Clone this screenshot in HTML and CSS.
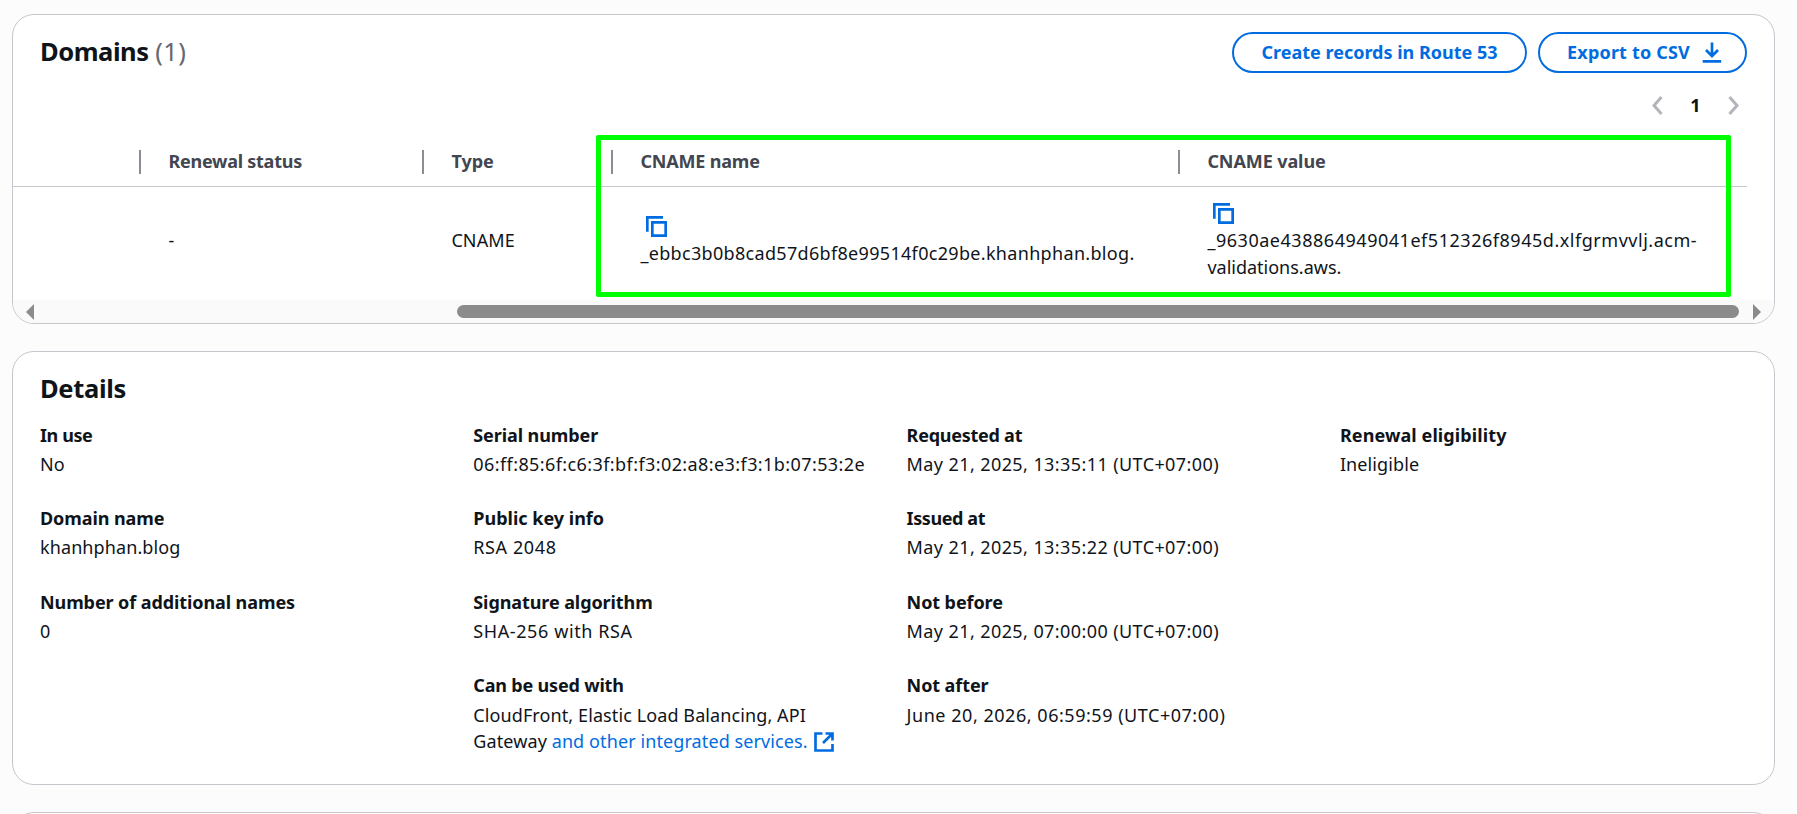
FILE: index.html
```html
<!DOCTYPE html>
<html lang="en">
<head>
<meta charset="utf-8">
<title>Certificate</title>
<link rel="stylesheet" href="styles.css">
</head>
<body>
<main class="page">
  <section class="card domains">
    <header class="card-header">
      <h2 class="heading"><span class="heading-domains">Domains</span> <span class="counter">(1)</span></h2>
      <div class="actions">
        <button class="button">Create records in Route 53</button>
        <button class="button button-icon track-2">Export to CSV
          <svg class="download" viewBox="0 0 20 21"><path d="M10 0.5V13.5M4 8L10 14L16 8M0.7 19.3H19.2"/></svg>
        </button>
      </div>
    </header>
    <nav class="pagination">
      <svg class="chevron" viewBox="0 0 11 19"><path d="M9.5 1L2 9.5L9.5 18"/></svg>
      <span class="page-number">1</span>
      <svg class="chevron" viewBox="0 0 11 19"><path d="M1.5 1L9 9.5L1.5 18"/></svg>
    </nav>
    <div class="table">
      <div class="row head-row">
        <div class="th"></div>
        <div class="th track-n3">Renewal status</div>
        <div class="th">Type</div>
        <div class="th track-n2">CNAME name</div>
        <div class="th track-n1">CNAME value</div>
      </div>
      <div class="row body-row">
        <div class="td"></div>
        <div class="td">-</div>
        <div class="td track-1">CNAME</div>
        <div class="td">
          <svg class="copy" viewBox="0 0 22 22"><path d="M1.33 15.7V1.33H17M6.33 6.33H19.67V19.67H6.33Z"/></svg>
          <span class="track-3">_ebbc3b0b8cad57d6bf8e99514f0c29be.khanhphan.blog.</span>
        </div>
        <div class="td">
          <svg class="copy" viewBox="0 0 22 22"><path d="M1.33 15.7V1.33H17M6.33 6.33H19.67V19.67H6.33Z"/></svg>
          <span class="track-5">_9630ae438864949041ef512326f8945d.xlfgrmvvlj.acm-</span>
          <span>validations.aws.</span>
        </div>
      </div>
      <div class="highlight"></div>
    </div>
    <div class="scrollbar">
      <svg class="arrow" viewBox="0 0 8 16"><path d="M8 0V16L0 8Z"/></svg>
      <div class="track"><div class="thumb"></div></div>
      <svg class="arrow" viewBox="0 0 8 16"><path d="M0 0V16L8 8Z"/></svg>
    </div>
  </section>

  <section class="card details">
    <h2 class="heading heading-details">Details</h2>
    <div class="columns">
      <dl class="column">
        <div><dt class="track-n4">In use</dt><dd>No</dd></div>
        <div><dt class="track-n1">Domain name</dt><dd class="track-1">khanhphan.blog</dd></div>
        <div><dt class="track-n1">Number of additional names</dt><dd>0</dd></div>
      </dl>
      <dl class="column">
        <div><dt class="track-n1">Serial number</dt><dd class="track-4">06:ff:85:6f:c6:3f:bf:f3:02:a8:e3:f3:1b:07:53:2e</dd></div>
        <div><dt>Public key info</dt><dd class="track-6">RSA 2048</dd></div>
        <div><dt class="track-n1">Signature algorithm</dt><dd class="track-6">SHA-256 with RSA</dd></div>
        <div><dt class="track-n2">Can be used with</dt><dd><span class="track-1">CloudFront, Elastic Load Balancing, API</span><br><span class="track-1">Gateway <a class="link">and other integrated services.<svg class="external" viewBox="0 0 20 20"><path d="M8.5 1.5H1.5V18.5H18.5V12M11.5 1.5H18.5V8.5M18.5 1.5L9 11"/></svg></a></span></dd></div>
      </dl>
      <dl class="column">
        <div><dt class="track-n3">Requested at</dt><dd class="track-4">May 21, 2025, 13:35:11 (UTC+07:00)</dd></div>
        <div><dt class="track-n4">Issued at</dt><dd class="track-4">May 21, 2025, 13:35:22 (UTC+07:00)</dd></div>
        <div><dt class="track-n1">Not before</dt><dd class="track-4">May 21, 2025, 07:00:00 (UTC+07:00)</dd></div>
        <div><dt class="track-n1">Not after</dt><dd class="track-5">June 20, 2026, 06:59:59 (UTC+07:00)</dd></div>
      </dl>
      <dl class="column">
        <div><dt class="track-1">Renewal eligibility</dt><dd class="track-1">Ineligible</dd></div>
      </dl>
    </div>
  </section>

  <section class="card next-card"></section>
</main>
</body>
</html>
```
FILE: styles.css
```css
* { box-sizing: border-box; }

body {
  margin: 0;
  background: #fcfcfd;
  color: #0f141a;
  font-family: "Noto Sans", "Open Sans", sans-serif;
  font-size: 18px;
  line-height: 26.67px;
}

.page {
  height: 814px;
  overflow: hidden;
  padding: 14px 22px 0 12px;
  display: flex;
  flex-direction: column;
  gap: 27px;
}

.card {
  flex: none;
  border: 1px solid #c6c6cd;
  border-radius: 22px;
  background: #fff;
  overflow: hidden;
}

.domains { height: 310px; }
.details { height: 434px; padding: 20px 27px 0; }
.next-card { height: 80px; }

.heading {
  margin: 0;
  font-size: 25.5px;
  font-weight: 700;
  line-height: 33px;
}
.heading-domains { letter-spacing: -0.45px; }
.heading-details { letter-spacing: -0.33px; }
.counter { color: #656871; font-weight: 400; letter-spacing: 0.4px; }

.card-header {
  display: flex;
  justify-content: space-between;
  padding: 17px 27px 0;
}
.card-header .heading { padding-top: 3px; }

.actions { display: flex; gap: 11px; }
.button {
  display: flex;
  align-items: center;
  justify-content: center;
  width: 295px;
  height: 41px;
  padding: 0;
  border: 2px solid #006ce0;
  border-radius: 21px;
  background: #fff;
  color: #006ce0;
  font: 700 18px/26.67px "Noto Sans", "Open Sans", sans-serif;
}
.button-icon { width: 209px; gap: 12px; padding-left: 4px; }
.download, .copy, .external, .chevron {
  fill: none;
  stroke: #006ce0;
  stroke-width: 2.67;
}
.download { width: 20px; height: 21px; }

.pagination {
  display: flex;
  align-items: center;
  justify-content: flex-end;
  height: 27px;
  margin-top: 19px;
  padding-right: 35px;
}
.chevron { width: 11px; height: 19px; stroke: #b4b4bb; stroke-width: 3; }
.page-number { width: 65px; text-align: center; font-weight: 700; }

.table { position: relative; height: 181px; padding-top: 27px; }
.row {
  display: grid;
  grid-template-columns: 128px 283px 189px 567px 567px;
  width: 1734px;
}
.head-row {
  height: 41px;
  border-bottom: 1px solid #c6c6cd;
  color: #424650;
  font-weight: 700;
}
.th {
  height: 24px;
  margin-top: 4px;
  padding-left: 27.4px;
  border-right: 2px solid #8c8c94;
  line-height: 22px;
}
.th:last-child { border-right: 0; }
.body-row { height: 106px; align-items: center; }
.td { display: flex; flex-direction: column; padding-left: 27.4px; }
.copy { width: 22px; height: 22px; margin: 3px 0 2px 5.6px; }

.highlight {
  position: absolute;
  left: 583px;
  top: 16px;
  width: 1135px;
  height: 162px;
  border: 5px solid #00ff00;
  border-radius: 2px;
  z-index: 1;
}

.scrollbar {
  display: flex;
  align-items: center;
  height: 23px;
  padding: 0 13px;
  background: #fafafa;
}
.arrow { width: 8px; height: 16px; fill: #8b8b8b; }
.track { flex: 1; padding: 0 14px 0 423px; }
.thumb { height: 13px; border-radius: 7px; background: #8b8b8b; }

.columns {
  display: grid;
  grid-template-columns: repeat(4, 433.3px);
  margin-top: 16.5px;
}
.column { display: flex; flex-direction: column; gap: 27.6px; margin: 0; }
dt { font-weight: 700; }
dd { margin: 2.67px 0 0; white-space: nowrap; }
.link { color: #006ce0; }
.external { width: 20px; height: 20px; margin-left: 6px; vertical-align: -4px; }

.track-n4 { letter-spacing: -0.4px; }
.track-n3 { letter-spacing: -0.25px; }
.track-n2 { letter-spacing: -0.18px; }
.track-n1 { letter-spacing: -0.09px; }
.track-1 { letter-spacing: 0.1px; }
.track-2 { letter-spacing: 0.18px; }
.track-3 { letter-spacing: 0.32px; }
.track-4 { letter-spacing: 0.41px; }
.track-5 { letter-spacing: 0.53px; }
.track-6 { letter-spacing: 0.6px; }
```
